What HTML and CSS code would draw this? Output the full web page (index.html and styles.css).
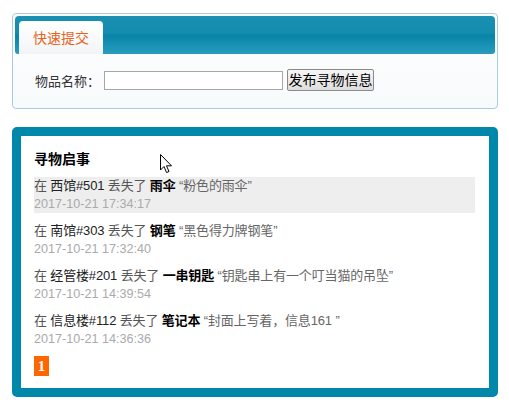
FILE: index.html
```html
<!DOCTYPE html>
<html lang="zh-CN">
<head>
<meta charset="utf-8">
<title>寻物启事</title>
<link rel="stylesheet" href="styles.css">
</head>
<body>
<div class="page">
  <div class="submit-box">
    <div class="tabbar">
      <div class="tab">快速提交</div>
    </div>
    <form class="form-row">
      <label class="label">物品名称：</label>
      <input class="name-input" type="text">
      <button class="btn" type="button">发布寻物信息</button>
    </form>
  </div>

  <div class="list-box">
    <h3 class="list-title">寻物启事</h3>
    <ul class="items">
      <li class="item active">
        <div class="line">在 <span class="place">西馆#501</span> 丢失了 <b class="thing">雨伞</b> <span class="desc">“粉色的雨伞”</span></div>
        <div class="date">2017-10-21 17:34:17</div>
      </li>
      <li class="item">
        <div class="line">在 <span class="place">南馆#303</span> 丢失了 <b class="thing">钢笔</b> <span class="desc">“黑色得力牌钢笔”</span></div>
        <div class="date">2017-10-21 17:32:40</div>
      </li>
      <li class="item">
        <div class="line">在 <span class="place">经管楼#201</span> 丢失了 <b class="thing">一串钥匙</b> <span class="desc">“钥匙串上有一个叮当猫的吊坠”</span></div>
        <div class="date">2017-10-21 14:39:54</div>
      </li>
      <li class="item">
        <div class="line">在 <span class="place">信息楼#112</span> 丢失了 <b class="thing">笔记本</b> <span class="desc">“封面上写着，信息161 ”</span></div>
        <div class="date">2017-10-21 14:36:36</div>
      </li>
    </ul>
    <div class="pager"><span class="page-num">1</span></div>
  </div>
</div>
<svg class="cursor" width="13" height="20" viewBox="0 0 13 20"><path d="M0.5 0.5 L0.5 16 L4 12.5 L6.5 18.5 L9 17.5 L6.5 11.8 L11.5 11.8 Z" fill="#fff" stroke="#000" stroke-width="1"/></svg>
</body>
</html>
```

FILE: styles.css
```css
html, body {
  margin: 0;
  padding: 0;
  background: #fff;
}
body {
  font-family: "Liberation Sans", "Noto Sans CJK SC", sans-serif;
  font-size: 13px;
  color: #333;
  position: relative;
}
.page {
  width: 486px;
  padding: 13px 0 0 12px;
  display: flex;
  flex-direction: column;
  gap: 18px;
}
.submit-box {
  border: 1px solid #a9cde0;
  border-radius: 4px;
  background: linear-gradient(#ffffff, #f7fafb);
  padding: 2px 2px 0 2px;
  box-sizing: border-box;
  height: 96px;
}
.tabbar {
  height: 38px;
  border-radius: 4px 4px 3px 3px;
  background: linear-gradient(#1a90b2 0%, #138cae 45%, #0784a8 52%, #1b93b6 80%, #2a9cbc 100%);
  display: flex;
  align-items: flex-end;
  padding-left: 4px;
}
.tab {
  width: 84px;
  height: 33px;
  box-sizing: border-box;
  border-radius: 4px 4px 0 0;
  background: linear-gradient(#ffffff, #f2f5f7);
  color: #e8641a;
  font-size: 14px;
  display: flex;
  align-items: center;
  justify-content: center;
  padding-bottom: 1px;
}
.form-row {
  margin: 0;
  display: flex;
  align-items: center;
  padding: 14px 0 0 20px;
  height: 24px;
}
.label {
  color: #333;
  font-size: 13px;
  margin-right: 4px;
}
.name-input {
  width: 179px;
  height: 19px;
  box-sizing: border-box;
  border: 1px solid #a6a6a6;
  margin: 0 4px 0 0;
  padding: 0;
  background: #fff;
}
.btn {
  width: 87px;
  height: 22px;
  box-sizing: border-box;
  margin: 0;
  padding: 0;
  border: 1px solid #8a8a8a;
  border-radius: 2px;
  background: linear-gradient(#f6f6f6, #dedede);
  font-family: "Liberation Sans", "Noto Sans CJK SC", sans-serif;
  font-size: 14px;
  color: #000;
  line-height: 18px;
}
.list-box {
  border: 9px solid #0088aa;
  border-radius: 5px;
  background: #fff;
  padding: 13px 14px 12px 13px;
}
.list-title {
  margin: 0 0 8px 0;
  font-size: 14px;
  line-height: 20px;
  font-weight: bold;
  color: #000;
}
.items {
  list-style: none;
  margin: 0;
  padding: 0;
  display: flex;
  flex-direction: column;
  gap: 9px;
}
.item {
  height: 36px;
  line-height: 18px;
}
.item.active {
  background: #eeeeee;
}
.line {
  color: #555;
  white-space: nowrap;
  letter-spacing: -0.15px;
}
.place {
  color: #222;
}
.thing {
  color: #000;
  font-weight: bold;
}
.desc {
  color: #666;
}
.date {
  color: #aaa;
  font-size: 12.6px;
}
.pager {
  margin-top: 8px;
  display: flex;
}
.page-num {
  width: 15px;
  height: 20px;
  background: #ff6600;
  color: #fff;
  font-family: "Liberation Serif", serif;
  font-size: 15px;
  font-weight: bold;
  display: flex;
  align-items: center;
  justify-content: center;
}
.cursor {
  position: absolute;
  left: 160px;
  top: 154px;
}
```
